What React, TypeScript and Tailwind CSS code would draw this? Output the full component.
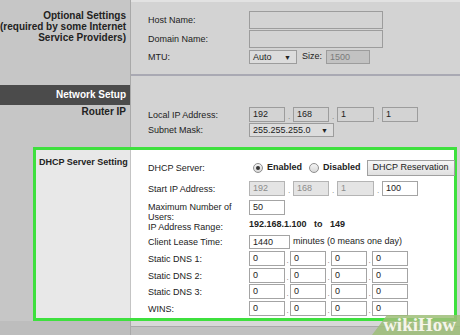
import React from "react";

type BoxProps = {
  w: string;
  h?: string;
  value?: string;
  tone?: "gray" | "white" | "disabled" | "dark";
};

const Box = ({ w, h = "h-[15px]", value = "", tone = "white" }: BoxProps) => {
  const tones = {
    gray: "bg-[#d3d3d3] border-[#9c9c9c] text-[#222]",
    white: "bg-white border-[#a4a4a4] text-[#222]",
    disabled: "bg-[#e4e4e4] border-[#b4b4b4] text-[#8c8c8c]",
    dark: "bg-[#c2c2c2] border-[#9c9c9c] text-[#7a7a7a]",
  };
  return (
    <div className={`${w} ${h} ${tones[tone]} flex items-center border pl-[3px] text-[9px] leading-none`}>
      {value}
    </div>
  );
};

const Dot = ({ gap = "w-[8px]" }: { gap?: string }) => (
  <span className={`${gap} self-end pb-[1px] text-center text-[8px] leading-none text-[#777]`}>.</span>
);

const Select = ({ w, value }: { w: string; value: string }) => (
  <div className={`${w} flex h-[14px] items-center justify-between border border-[#9c9c9c] bg-[#dcdcdc] pl-[3px] pr-[5px] text-[9px] leading-none text-[#222]`}>
    <span>{value}</span>
    <span className="text-[7px]">▼</span>
  </div>
);

const Row = ({ label, className = "", children }: { label: React.ReactNode; className?: string; children?: React.ReactNode }) => (
  <div className={`flex items-center ${className}`}>
    <div className="w-[101px] shrink-0 text-[9px] leading-[10px] text-[#222]">{label}</div>
    <div className="flex items-center">{children}</div>
  </div>
);

const Radio = ({ on, label }: { on?: boolean; label: string }) => (
  <span className="flex items-center gap-[4px]">
    <span className="flex h-[10px] w-[10px] items-center justify-center rounded-full border border-[#8e8e8e] bg-gradient-to-b from-[#f4f4f4] to-[#d8d8d8]">
      {on && <span className="h-[4px] w-[4px] rounded-full bg-[#333]" />}
    </span>
    <span className="text-[9px] font-bold leading-none text-[#222]">{label}</span>
  </span>
);

const IpRow = ({ values, tones, gap = "w-[8px]", widths }: { values: string[]; tones: BoxProps["tone"][]; gap?: string; widths: string[] }) => (
  <div className="flex items-center">
    {values.map((v, i) => (
      <React.Fragment key={i}>
        {i > 0 && <Dot gap={gap} />}
        <Box w={widths[i]} value={v} tone={tones[i]} />
      </React.Fragment>
    ))}
  </div>
);

export default function App() {
  const ipW = ["w-[36px]", "w-[36px]", "w-[37px]", "w-[36px]"];
  const dnsW = ["w-[36px]", "w-[36px]", "w-[36px]", "w-[36px]"];

  return (
    <div className="relative h-[335px] w-[460px] overflow-hidden bg-[#d3d3d3] font-['Liberation_Sans',Arial,sans-serif]">
      {/* Optional settings */}
      <div className="flex h-[76px]">
        <div className="w-[131px] shrink-0 whitespace-nowrap border-r border-[#a9a9a9] bg-[#c6c6c6] pr-[4px] pt-[10px] text-right text-[10px] font-bold leading-[11px] text-[#222]">
          Optional Settings
          <br />
          (required by some Internet
          <br />
          Service Providers)
        </div>
        <div className="flex-1 border-t-2 border-b-2 border-t-[#e2e2e2] border-b-[#a9a9b3] pl-[17px] pt-[9px]">
          <Row label="Host Name:">
            <Box w="w-[134px]" h="h-[18px]" tone="gray" />
          </Row>
          <Row label="Domain Name:" className="mt-[1px]">
            <Box w="w-[134px]" h="h-[18px]" tone="gray" />
          </Row>
          <Row label="MTU:" className="mt-[2px]">
            <Select w="w-[48px]" value="Auto" />
            <span className="ml-[5px] mr-[4px] text-[9px] text-[#222]">Size:</span>
            <Box w="w-[44px]" h="h-[14px]" value="1500" tone="dark" />
          </Row>
        </div>
      </div>

      {/* Network setup */}
      <div className="flex h-[71px]">
        <div className="w-[131px] shrink-0 border-r border-[#a9a9a9] bg-[#c6c6c6] pt-[9px]">
          <div className="h-[20px] bg-[#4b4b4b] pr-[4px] text-right text-[10px] font-bold leading-[20px] text-white">Network Setup</div>
          <div className="mt-[1px] pr-[4px] text-right text-[10px] font-bold leading-[11px] text-[#222]">Router IP</div>
        </div>
        <div className="flex-1 pl-[17px] pt-[31px]">
          <Row label="Local IP Address:">
            <IpRow values={["192", "168", "1", "1"]} tones={["gray", "gray", "gray", "gray"]} widths={ipW} />
          </Row>
          <Row label="Subnet Mask:" className="mt-[1px]">
            <Select w="w-[85px]" value="255.255.255.0" />
          </Row>
        </div>
      </div>

      {/* DHCP server setting */}
      <div className="flex h-[174px]">
        <div className="w-[33px] shrink-0 bg-[#c6c6c6]" />
        <div className="flex w-[424px] shrink-0 border-[3px] border-[#3ee03e]">
          <div className="w-[95px] min-w-0 shrink-0 whitespace-nowrap border-r border-[#c4c4c4] bg-[#e8e8e8] pl-[3px] pt-[7px] text-[9px] font-bold leading-[11px] text-[#222]">
            DHCP Server Setting
          </div>
          <div className="min-w-0 flex-1 bg-white pl-[17px] pt-[9px]">
            <Row label="DHCP Server:" className="h-[17px]">
              <div className="flex items-center gap-[7px] pl-[4px]">
                <Radio on label="Enabled" />
                <Radio label="Disabled" />
              </div>
              <div className="ml-[6px] flex h-[16px] w-[88px] shrink-0 items-center justify-center border border-[#a0a0a0] bg-gradient-to-b from-[#f6f6f6] to-[#e0e0e0] text-[9px] text-[#222]">
                DHCP Reservation
              </div>
            </Row>
            <Row label="Start IP Address:" className="mt-[5px] h-[15px]">
              <IpRow values={["192", "168", "1", "100"]} tones={["disabled", "disabled", "disabled", "white"]} widths={ipW} />
            </Row>
            <div className="mt-[6px] flex">
              <div className="w-[101px] shrink-0 text-[9px] leading-[10px] text-[#222]">
                Maximum Number of
                <br />
                Users:
              </div>
              <div className="mt-[-2px]">
                <Box w="w-[36px]" value="50" />
              </div>
            </div>
            <Row label="IP Address Range:" className="h-[10px]">
              <span className="mt-[-6px] whitespace-pre text-[9px] font-bold leading-none text-[#222]">192.168.1.100   to   149</span>
            </Row>
            <Row label="Client Lease Time:" className="mt-[3px] h-[14px]">
              <Box w="w-[41px]" h="h-[14px]" value="1440" />
              <span className="ml-[3px] text-[9px] text-[#222]">minutes (0 means one day)</span>
            </Row>
            {["Static DNS 1:", "Static DNS 2:", "Static DNS 3:", "WINS:"].map((l, i) => (
              <Row key={l} label={l} className={`${i === 2 ? "mt-[1px]" : "mt-[2px]"} h-[15px]`}>
                <IpRow values={["0", "0", "0", "0"]} tones={["white", "white", "white", "white"]} gap="w-[5px]" widths={dnsW} />
              </Row>
            ))}
          </div>
        </div>
        <div className="flex-1" />
      </div>

      {/* Bottom strip */}
      <div className="flex h-[14px]">
        <div className="w-[131px] shrink-0 border-r border-[#a9a9a9] bg-[#bdbdbd]" />
        <div className="flex-1">
          <div className="h-[5px] bg-[#d8d8d8]" />
          <div className="h-[9px] border-t border-[#a8a8a8] bg-[#c0c0c0]" />
        </div>
      </div>

      {/* wikiHow watermark */}
      <div className="absolute bottom-0 right-0 h-[20px] w-[88px]">
        <svg className="absolute inset-0" width="88" height="20" viewBox="0 0 88 20">
          <polygon points="0,20 15,0 88,0 88,20" fill="#9dbe78" fillOpacity="0.85" />
        </svg>
        <div className="absolute bottom-[1px] right-[4px] font-['Liberation_Serif',serif] text-[19px] font-bold leading-none text-[#f5f5ea]">
          wiki<span className="font-black">How</span>
        </div>
      </div>
    </div>
  );
}
